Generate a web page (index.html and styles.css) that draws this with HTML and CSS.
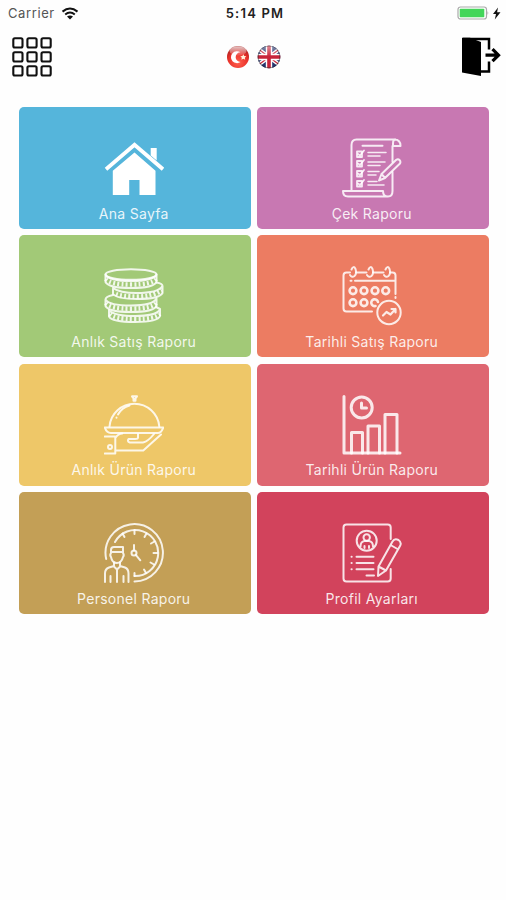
FILE: index.html
```html
<!DOCTYPE html>
<html lang="tr">
<head>
    <meta charset="UTF-8">
    <meta name="viewport" content="width=device-width, initial-scale=1.0">
    <title>Raporlar</title>
    <link rel="stylesheet" href="styles.css">
</head>
<body>
    <div class="status-bar">
        <div class="status-left">
            <span class="carrier">Carrier</span>
            <svg class="wifi" width="18" height="13" viewBox="0 0 18 13">
                <path d="M1.5 4.6Q9-1.5 16.5 4.6M4.2 7.5Q9 3.6 13.8 7.5" fill="none" stroke="#111" stroke-width="2"/>
                <path d="M6 9.6Q9 7.4 12 9.6L9 12.6z" fill="#111"/>
            </svg>
        </div>
        <span class="time">5:14 PM</span>
        <div class="status-right">
            <svg width="45" height="15" viewBox="0 0 45 15">
                <rect x="1" y="1" width="28.5" height="12" rx="2.5" fill="#fff" stroke="#aaa" stroke-width="1.2"/>
                <rect x="2.7" y="2.7" width="24.6" height="8.6" rx="0.8" fill="#43d65a"/>
                <path d="M30.5 5q1.8 2 0 4z" fill="#aaa"/>
                <path d="M41 1.5L36 8h3l-1.2 5.5L43.500 6.300h-3.400z" fill="#111"/>
            </svg>
        </div>
    </div>

    <div class="toolbar">
        <svg class="menu-icon" width="40" height="40" viewBox="0 0 40 40">
            <g fill="#fff" stroke="#111" stroke-width="2.1">
                <rect x="1.3" y="1.3" width="9.2" height="9.2" rx="1.5"/>
                <rect x="15.4" y="1.3" width="9.2" height="9.2" rx="1.5"/>
                <rect x="29.5" y="1.3" width="9.2" height="9.2" rx="1.5"/>
                <rect x="1.3" y="15.3" width="9.2" height="9.2" rx="1.5"/>
                <rect x="15.4" y="15.3" width="9.2" height="9.2" rx="1.5"/>
                <rect x="29.5" y="15.3" width="9.2" height="9.2" rx="1.5"/>
                <rect x="1.3" y="29.3" width="9.2" height="9.2" rx="1.5"/>
                <rect x="15.4" y="29.3" width="9.2" height="9.2" rx="1.5"/>
                <rect x="29.5" y="29.3" width="9.2" height="9.2" rx="1.5"/>
            </g>
        </svg>

        <div class="languages">
            <svg width="24" height="24" viewBox="0 0 24 24">
                <defs>
                    <radialGradient id="red" cx=".5" cy=".75" r=".7">
                        <stop offset="0" stop-color="#ff604e"/>
                        <stop offset=".65" stop-color="#e83029"/>
                        <stop offset="1" stop-color="#a92220"/>
                    </radialGradient>
                    <linearGradient id="shine" x1="0" y1="0" x2="0" y2="1">
                        <stop offset="0" stop-color="#fff" stop-opacity=".75"/>
                        <stop offset="1" stop-color="#fff" stop-opacity=".1"/>
                    </linearGradient>
                    <clipPath id="round"><circle cx="12" cy="12" r="11.3"/></clipPath>
                </defs>
                <circle cx="12" cy="12" r="11" fill="url(#red)"/>
                <path d="M14.5 7.3A6 6 0 1 0 14.5 17 4.8 4.8 0 1 1 14.5 7.3z" fill="#fff"/>
                <path d="M17.3 9.2l.9 1.9 2.1.2-1.5 1.4.4 2.1-1.9-1-1.9 1 .4-2.1-1.5-1.4 2.1-.2z" fill="#fff3dc"/>
                <ellipse cx="12" cy="6" rx="8.5" ry="4.7" fill="url(#shine)"/>
            </svg>
            <svg width="24" height="24" viewBox="0 0 24 24">
                <g clip-path="url(#round)">
                    <path d="M0 0h24v24H0z" fill="#25346f"/>
                    <path d="M0 3l24 18M24 3L0 21" stroke="#fff" stroke-width="4"/>
                    <path d="M0 3l24 18M24 3L0 21" stroke="#c9283b" stroke-width="1.3"/>
                    <path d="M12 0v24M0 12h24" stroke="#fff" stroke-width="6.4"/>
                    <path d="M12 0v24M0 12h24" stroke="#c8243a" stroke-width="3.6"/>
                </g>
                <circle cx="12" cy="12" r="10.9" fill="none" stroke="#222" stroke-opacity=".45"/>
                <ellipse cx="12" cy="6" rx="8.5" ry="4.7" fill="url(#shine)" opacity=".6"/>
            </svg>
        </div>

        <svg class="exit-icon" width="40" height="40" viewBox="0 0 40 40">
            <path d="M1 .8h8L20 5v34L1 35.5z"/>
            <path d="M2 2h26v10.5M28 24.5v10H19" fill="none" stroke="#000" stroke-width="2.5"/>
            <path d="M24.5 18.2h13M31.5 12.2l6 6-6 6" fill="none" stroke="#000" stroke-width="3.2"/>
        </svg>
    </div>

    <div class="menu">
        <div class="tile blue">
            <svg class="icon" viewBox="0 0 60 60">
                <g class="solid">
                    <path d="M46.7 10h6v12.5l-6-5z"/>
                    <path d="M30.5 14.500l21 18.200V57h-16V42H25.200v15H8.800V32.700z"/>
                </g>
                <path d="M2 31.200L30.500 6.800 59 31.200" stroke="#fff" stroke-width="3.800" stroke-linecap="butt" stroke-linejoin="miter"/>
            </svg>
            <span class="label">Ana Sayfa</span>
        </div>

        <div class="tile pink">
            <svg class="icon" viewBox="0 0 60 60">
                <path d="M9.500 52V7q0-5.500 5-5.500h38q6 0 6 6.500h-7.500V5.500q0-4 2.500-4M50.500 8v16M50.500 34v19q0 5.500-4.500 5.500H6q-5 0-5-5.500h40q0 5.500 5 5.500"/>
                <path d="M20.500 7.700h20"/>
                <path d="M26 14.500h18M26 18h12M26 24h17M26 27.500h12M26 33.500h11M26 37h8M26 43.500h9M26 47h16" stroke-width="1.500"/>
                <g stroke-width="1.800">
                    <path d="M15 13.500h5v5.500h-5zM15 23h5v5.500h-5zM15 33h5v5.500h-5zM15 43h5v5.500h-5z"/>
                    <path d="M16 16l2 1.500 4-5M16 25.500l2 1.500 4-5M16 35.500l2 1.500 4-5M16 45.500l2 1.500 4-5"/>
                </g>
                <path d="M37 42.500l2.500-6.500L54 22q2-1.500 3.500 0t.5 3.500L43 40zM39.500 36l3.500 4"/>
            </svg>
            <span class="label">Çek Raporu</span>
        </div>

        <div class="tile green">
            <svg class="icon" viewBox="0 0 60 60">
                <g stroke-width="4.500" stroke-linecap="butt" stroke-dasharray="2 2.200">
                    <path d="M2 13Q6 18.500 27 18.500T52 13"/>
                    <path d="M12 28Q18 30.500 33 30.500T58 24.500"/>
                    <path d="M2 37Q6 42.700 27 42.700T52 37"/>
                    <path d="M6 48Q10 53 31 53t24.500-5"/>
                </g>
                <ellipse cx="27" cy="8.500" rx="25.500" ry="5.200"/>
                <path d="M1.500 8.500V16q3 6 25.500 6t25.500-6V8.500q-3 6.500-25.500 6.500T1.500 8.500z"/>
                <path d="M52.500 16.500q6 1 6 3.500v7q-3 6-25.500 6-20 0-24-5v-6M58.500 20q-4 7-26 7-17 0-23.500-5"/>
                <path d="M9 29q-7.500 1.500-7.500 4.500V40q3 6 25.500 6t25.500-6v-7.500M1.500 33.500Q5 39.500 27 39.500t25.500-7"/>
                <path d="M5 44v6.500q3 5.500 26 5.500t25-6V43l-4-2M5 44.500q6 5.500 26 5.500t25-6"/>
            </svg>
            <span class="label">Anlık Satış Raporu</span>
        </div>

        <div class="tile orange">
            <svg class="icon" viewBox="0 0 60 60">
                <path d="M30 45.500H4.500q-3 0-3-3V9.500q0-3 3-3h3.500M14 6.500h10.500M31 6.500h10.500M48 6.500h2.500q3 0 3 3V28M53.500 31v1M8.500 14.700h1M13 14.700h40"/>
                <path d="M8 9q2 3 4.500 1t1-7q-2-4-4 .5M25 9q2 3 4.500 1t1-7q-2-4-4 .5M42 9q2 3 4.500 1t1-7q-2-4-4 .5"/>
                <g stroke-width="2.600">
                    <circle cx="11" cy="24.700" r="3.400"/>
                    <circle cx="22" cy="24.700" r="3.400"/>
                    <circle cx="33" cy="24.700" r="3.400"/>
                    <circle cx="43.700" cy="24.700" r="3.400"/>
                    <circle cx="11" cy="36.700" r="3.400"/>
                    <circle cx="22" cy="36.700" r="3.400"/>
                    <path d="M33.500 40a3.400 3.400 0 1 1 2.500-4"/>
                </g>
                <circle cx="47" cy="46.500" r="11.700"/>
                <path d="M41 49.500l3.500-3.500 4 2.500 5-5.500M49.500 43h4v3.500" stroke-width="2.200"/>
            </svg>
            <span class="label">Tarihli Satış Raporu</span>
        </div>

        <div class="tile yellow">
            <svg class="icon" viewBox="0 0 60 60">
                <path d="M28 1.300h5l-1.500 2v2.500h-2V3.300zM5.500 31.500a25 25 0 0 1 49.800 0"/>
                <path d="M14 19.500q4-7 11.500-9M12.500 22.500v.2"/>
                <path d="M.8 32.500h58.500q-2 5.500-5.500 5.500H7q-4.500 0-6.200-5.500z"/>
                <path d="M.8 41.500h10.500v17H.8M11.300 43q3-4.500 7-4.500M11.300 55.500h28L57 39.500M34 39v3.500q0 1.500-3 1.500h-6.500q-1.500 2 1 3.500H39q5-1 11-8.500"/>
                <circle cx="6" cy="52" r="2"/>
            </svg>
            <span class="label">Anlık Ürün Raporu</span>
        </div>

        <div class="tile rose">
            <svg class="icon thick" viewBox="0 0 60 60">
                <path d="M2 1.500V58h56"/>
                <path d="M9.500 58V37.500h11V58M26 58V31h11.500v27M43 58V19.500h12V58"/>
                <circle cx="19.700" cy="12.500" r="10.500"/>
                <path d="M19.500 8v5h5"/>
            </svg>
            <span class="label">Tarihli Ürün Raporu</span>
        </div>

        <div class="tile brown">
            <svg class="icon" viewBox="0 0 60 60">
                <path d="M2.200 36A28.700 28.700 0 1 1 30.500 58.500M11 19A23 23 0 1 1 30.500 53"/>
                <path d="M30.500 7v4M53.500 30h-4M42.500 10.500l-2 3.500M50.500 18.500l-3.500 2M18.500 10.500l2 3.500M50 41.500l-3.500-2M42 50l-2-3.500M30.500 53v-3"/>
                <circle cx="30" cy="30" r="2.500"/>
                <path d="M30 27.500V22M31.800 31.800l4.500 5.500"/>
                <path d="M7 30v-3q0-3 3-3h9v6q1.500 2 0 4-1.500 6-6.200 6T7 34q-1.500-2 0-4zM7 29h12"/>
                <path d="M10 39.500v4l3 3 3-3v-4M10 43l-5 1.500q-4 1.500-4 6v8.500M16 43l5 1.500q3.500 1.500 3.500 6v8.500M13 46.500V59M6.500 53v6M19.500 53v6"/>
            </svg>
            <span class="label">Personel Raporu</span>
        </div>

        <div class="tile red">
            <svg class="icon" viewBox="0 0 60 60">
                <path d="M48.700 16V4.500q0-3-3-3H4.500q-3 0-3 3v51q0 3 3 3h41.200q3 0 3-3V46"/>
                <circle cx="24.700" cy="17.700" r="10"/>
                <circle cx="24.700" cy="14.500" r="3.200"/>
                <path d="M18.500 23.500q0-5 4-5.500h4.500q4 .5 4 5.500M22.500 23v2M27 23v2"/>
                <path d="M14.500 33.700h17M14.500 39.900h17M14.500 46.200h17M24.500 52.500h7.500M9.500 33.700h.2M9.500 39.900h.2M9.500 46.200h.2"/>
                <path d="M36 53l.5-9.500 14-25q2-3.500 6-1.500 3.500 2.500 1.500 6L44 47.500zM36.500 43.500l7.500 4M48.500 22l7 4"/>
            </svg>
            <span class="label">Profil Ayarları</span>
        </div>
    </div>
</body>
</html>
```
FILE: styles.css
```css
body {
    margin: 0;
    width: 506px;
    height: 900px;
    background-color: #fefefe;
    font-family: Inter, Arial, sans-serif;
    overflow: hidden;
}

svg {
    display: block;
}

.status-bar {
    display: grid;
    grid-template-columns: 1fr auto 1fr;
    align-items: center;
    height: 26px;
    padding: 0 4px 0 8px;
    font-size: 13px;
}

.status-left {
    display: flex;
    align-items: center;
    gap: 6px;
}

.carrier {
    color: #555;
    letter-spacing: 0.6px;
}

.time {
    color: #222;
    font-weight: 600;
    letter-spacing: 1.2px;
}

.status-right {
    display: flex;
    justify-content: flex-end;
}

.toolbar {
    display: flex;
    justify-content: space-between;
    align-items: center;
    height: 61px;
    padding: 0 5px 0 12px;
}

.languages {
    display: flex;
    gap: 7px;
    margin-right: 7px;
}

.menu {
    display: grid;
    grid-template-columns: 231.5px 231.5px;
    grid-auto-rows: 122px;
    gap: 6.4px 6.5px;
    padding: 20px 0 0 19px;
}

.tile {
    display: flex;
    flex-direction: column;
    align-items: center;
    box-sizing: border-box;
    padding: 31px 2px 0 0;
    border-radius: 5px;
}

.icon {
    width: 60px;
    height: 60px;
    fill: none;
    stroke: rgba(255, 255, 255, 0.85);
    stroke-width: 2;
    stroke-linecap: round;
    stroke-linejoin: round;
}

.thick {
    stroke-width: 3;
}

.solid {
    fill: #fff;
    stroke: none;
}

.label {
    margin-top: 6.5px;
    color: rgba(255, 255, 255, 0.88);
    font-size: 14px;
    line-height: 17px;
    letter-spacing: 0.28px;
    white-space: nowrap;
}

.blue {
    background-color: #55b5db;
}

.pink {
    background-color: #c878b2;
}

.green {
    background-color: #a2c977;
}

.orange {
    background-color: #ec7c62;
}

.yellow {
    background-color: #eec768;
}

.rose {
    background-color: #de6671;
}

.brown {
    background-color: #c39f56;
}

.red {
    background-color: #d2435c;
}
```
